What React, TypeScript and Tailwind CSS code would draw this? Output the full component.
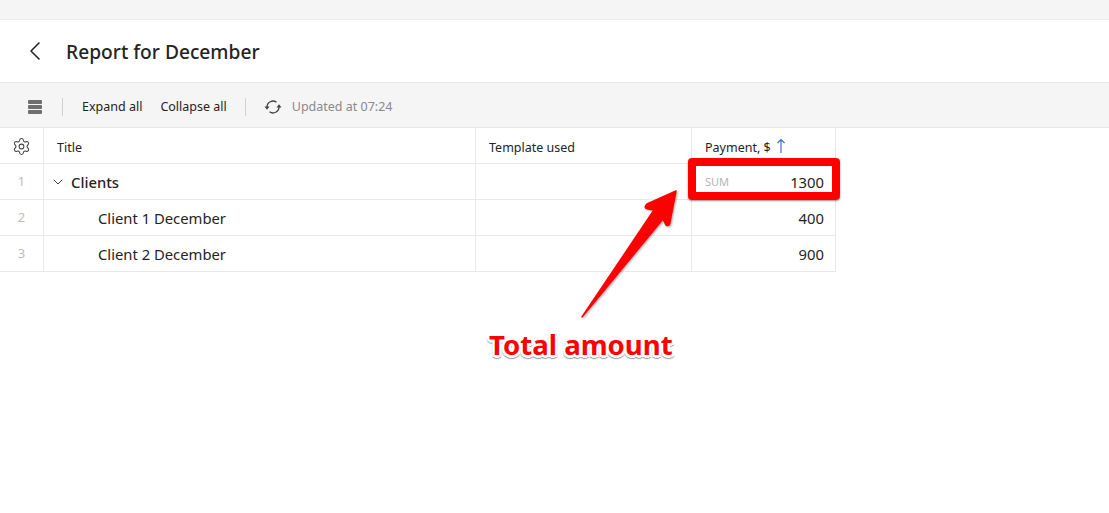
import React from 'react';
import { ChevronDown, ChevronLeft, Settings } from 'lucide-react';

const rows = [
  { num: 1, title: 'Clients', amount: '1300', group: true },
  { num: 2, title: 'Client 1 December', amount: '400', group: false },
  { num: 3, title: 'Client 2 December', amount: '900', group: false },
];

const cell = 'h-9 border-r border-b border-[#e9e9e9]';

export default function App() {
  return (
    <div className="relative h-[513px] w-[1109px] overflow-hidden bg-white font-['Noto_Sans','Open_Sans',sans-serif] text-[#242424]">
      <div className="h-5 border-b border-[#ebebeb] bg-[#f5f5f5]" />

      <div className="flex h-[63px] items-center border-b border-[#e6e6e6] pl-[19px]">
        <ChevronLeft className="h-8 w-8 text-[#242424]" strokeWidth={1.2} />
        <h1 className="ml-[15px] pt-[2px] text-[19.2px] font-medium">Report for December</h1>
      </div>

      <div className="flex h-[45px] items-center border-b border-[#e6e6e6] bg-[#f5f5f5] pt-[4px] text-[12.5px]">
        <div className="ml-[28px] flex w-[14px] flex-col gap-[1px]">
          <span className="h-[4px] rounded-[1px] bg-[#6e6e6e]" />
          <span className="h-[4px] rounded-[1px] bg-[#6e6e6e]" />
          <span className="h-[4px] rounded-[1px] bg-[#6e6e6e]" />
        </div>
        <span className="ml-[20px] h-[18px] w-px bg-[#d1d1d1]" />
        <span className="ml-[19px]">Expand all</span>
        <span className="ml-[18px]">Collapse all</span>
        <span className="ml-[18px] h-[18px] w-px bg-[#d1d1d1]" />
        <svg className="ml-[18px] h-[14px] w-[18px] text-[#424242]" viewBox="0 0 18 14" fill="none">
          <path d="M3 7A6 6 0 0 1 12.500 2.200M15 7A6 6 0 0 1 5.500 11.800" stroke="currentColor" strokeWidth="1.300" />
          <path d="M0.500 6.500H5.500L3 9.800ZM12.500 7.500H17.500L15 4.200Z" fill="currentColor" />
        </svg>
        <span className="ml-[10px] text-[#8a8a8a]">Updated at 07:24</span>
      </div>

      <div className="grid w-[836px] grid-cols-[44px_432px_216px_144px]">
        <div className={`${cell} flex items-center justify-center pt-[1px]`}>
          <Settings className="h-[19px] w-[19px] text-[#424242]" strokeWidth={1.3} />
        </div>
        <div className={`${cell} flex items-center pl-[13px] pt-[6px] text-[12.5px]`}>Title</div>
        <div className={`${cell} flex items-center pl-[13px] pt-[6px] text-[12.5px]`}>Template used</div>
        <div className={`${cell} flex items-center pl-[13px] pt-[6px] text-[12.5px]`}>
          Payment, $
          <svg className="ml-[5px] -mt-[5px] h-4 w-[10px] text-[#3b6fd8]" viewBox="0 0 10 16" fill="none" stroke="currentColor" strokeWidth="1.2">
            <path d="M5 15V1.500M1.500 5 5 1.500 8.500 5" />
          </svg>
        </div>

        {rows.map((row) => (
          <React.Fragment key={row.num}>
            <div className={`${cell} flex items-center justify-center text-[13px] text-[#c4bcb8]`}>{row.num}</div>
            <div className={`${cell} flex items-center pt-[2px] text-[14.8px]`}>
              {row.group ? (
                <>
                  <ChevronDown className="ml-[6px] -mt-[2px] h-4 w-4 text-[#424242]" strokeWidth={1.5} />
                  <span className="ml-[5px] font-medium">{row.title}</span>
                </>
              ) : (
                <span className="ml-[54px]">{row.title}</span>
              )}
            </div>
            <div className={cell} />
            <div className={`${cell} flex items-center justify-between pl-[13px] pr-[11px] pt-[2px] text-[14.8px]`}>
              {row.group ? <span className="text-[11px] text-[#b5b5b5]">SUM</span> : <span />}
              <span>{row.amount}</span>
            </div>
          </React.Fragment>
        ))}
      </div>

      {/* annotation on top of the table */}
      <div className="absolute left-[688px] top-[158px] h-[42px] w-[152px] rounded-[4px] border-8 border-[#ff0000] shadow-[0_1px_2px_rgba(0,0,0,0.45)]" />
      <svg className="absolute left-[570px] top-[185px] h-[140px] w-[120px]" viewBox="0 0 120 140">
        <path
          d="M106 6 L77 19 Q73 23 78 24 L84 25 L12 132 L93 34 L96 40 Q100 42 100 37 Z"
          fill="#ff0000"
          stroke="#ff0000"
          strokeWidth="1.500"
          strokeLinejoin="round"
          style={{ filter: 'drop-shadow(1px 1px 1px rgba(0,0,0,0.35))' }}
        />
      </svg>
      <div className="absolute left-[489px] top-[325px] text-[27.6px] leading-[38px] font-bold text-[#ff0000] [text-shadow:-2px_0_0_#fff,2px_0_0_#fff,0_-2px_0_#fff,0_2px_0_#fff,2px_2px_0_#fff,-2px_2px_0_#fff,2px_-2px_0_#fff,-2px_-2px_0_#fff,0_3px_0_#fff,0_4px_1px_#999,2px_3px_1px_#999,-2px_3px_1px_#999]">
        Total amount
      </div>
    </div>
  );
}
